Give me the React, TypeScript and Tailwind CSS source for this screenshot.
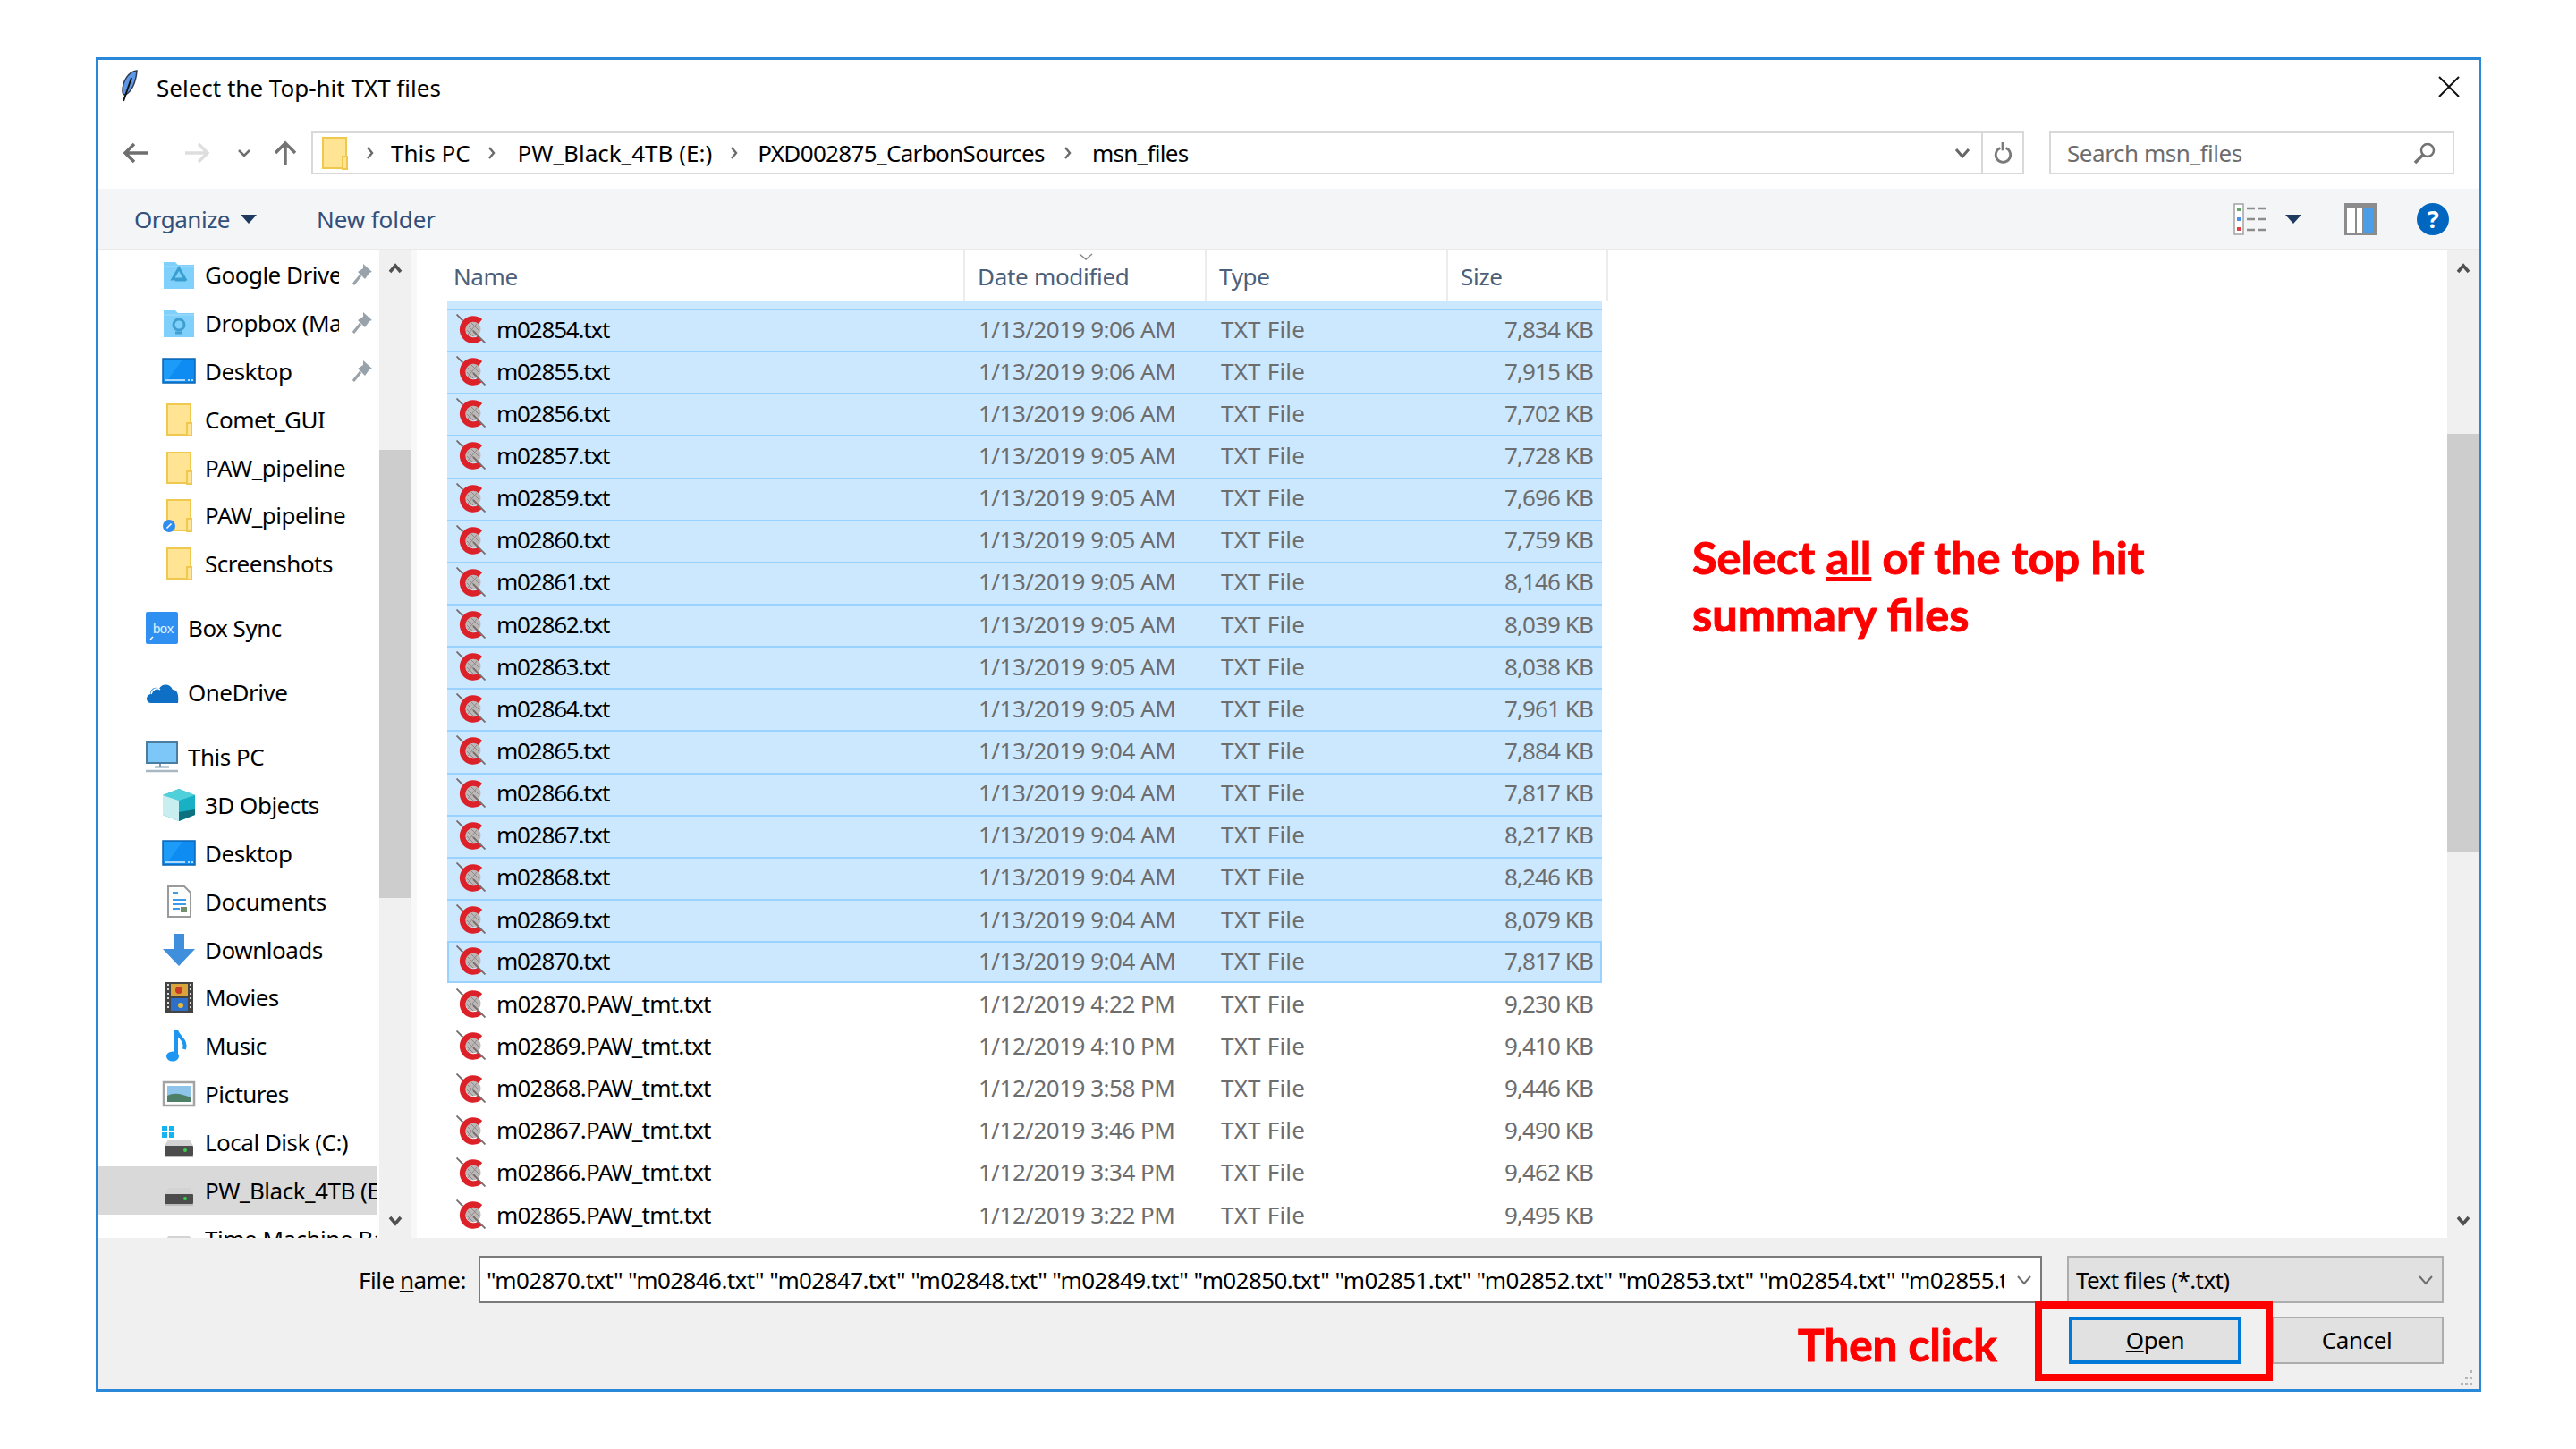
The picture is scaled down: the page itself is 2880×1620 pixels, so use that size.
import React from 'react';

type FileRow = { name: string; date: string; size: string; selected?: boolean };

const FILES: FileRow[] = [
  { name: 'm02854.txt', date: '1/13/2019 9:06 AM', size: '7,834 KB', selected: true },
  { name: 'm02855.txt', date: '1/13/2019 9:06 AM', size: '7,915 KB', selected: true },
  { name: 'm02856.txt', date: '1/13/2019 9:06 AM', size: '7,702 KB', selected: true },
  { name: 'm02857.txt', date: '1/13/2019 9:05 AM', size: '7,728 KB', selected: true },
  { name: 'm02859.txt', date: '1/13/2019 9:05 AM', size: '7,696 KB', selected: true },
  { name: 'm02860.txt', date: '1/13/2019 9:05 AM', size: '7,759 KB', selected: true },
  { name: 'm02861.txt', date: '1/13/2019 9:05 AM', size: '8,146 KB', selected: true },
  { name: 'm02862.txt', date: '1/13/2019 9:05 AM', size: '8,039 KB', selected: true },
  { name: 'm02863.txt', date: '1/13/2019 9:05 AM', size: '8,038 KB', selected: true },
  { name: 'm02864.txt', date: '1/13/2019 9:05 AM', size: '7,961 KB', selected: true },
  { name: 'm02865.txt', date: '1/13/2019 9:04 AM', size: '7,884 KB', selected: true },
  { name: 'm02866.txt', date: '1/13/2019 9:04 AM', size: '7,817 KB', selected: true },
  { name: 'm02867.txt', date: '1/13/2019 9:04 AM', size: '8,217 KB', selected: true },
  { name: 'm02868.txt', date: '1/13/2019 9:04 AM', size: '8,246 KB', selected: true },
  { name: 'm02869.txt', date: '1/13/2019 9:04 AM', size: '8,079 KB', selected: true },
  { name: 'm02870.txt', date: '1/13/2019 9:04 AM', size: '7,817 KB', selected: true },
  { name: 'm02870.PAW_tmt.txt', date: '1/12/2019 4:22 PM', size: '9,230 KB' },
  { name: 'm02869.PAW_tmt.txt', date: '1/12/2019 4:10 PM', size: '9,410 KB' },
  { name: 'm02868.PAW_tmt.txt', date: '1/12/2019 3:58 PM', size: '9,446 KB' },
  { name: 'm02867.PAW_tmt.txt', date: '1/12/2019 3:46 PM', size: '9,490 KB' },
  { name: 'm02866.PAW_tmt.txt', date: '1/12/2019 3:34 PM', size: '9,462 KB' },
  { name: 'm02865.PAW_tmt.txt', date: '1/12/2019 3:22 PM', size: '9,495 KB' },
];

const Svg: React.FC<{ children: React.ReactNode; className?: string; box?: string }> = ({
  children,
  className = 'w-[36px] h-[36px] shrink-0 overflow-visible',
  box = '0 0 36 36',
}) => (
  <svg viewBox={box} className={className} fill="none">
    {children}
  </svg>
);

const CometIcon = () => (
  <svg viewBox="0 0 33 33" className="w-[33px] h-[33px] shrink-0">
    <circle cx="19" cy="17" r="8.5" fill="#bdb8b8" />
    <path d="M13 13l10 10M17 10l8 8M12 18l7 7M23 11L13 23" stroke="#8f8a8a" strokeWidth="1" />
    <path d="M27 8.5A12 12 0 1 0 26.5 27" stroke="#dc2228" strokeWidth="6.5" fill="none" />
    <path d="M0.5 0.5l7 7M19 19l13.5 13.5" stroke="#776c6c" strokeWidth="1.8" />
  </svg>
);

const YellowFolder: React.FC<{ badge?: boolean }> = ({ badge }) => (
  <Svg>
    <rect x="5" y="1" width="26" height="34" fill="#ffe593" stroke="#efc850" strokeWidth="2" />
    <rect x="27" y="22" width="5" height="14" fill="#ffe593" stroke="#efc850" strokeWidth="2" />
    {badge && (
      <>
        <circle cx="7" cy="30" r="7" fill="#2f8cf0" />
        <path d="M4.5 32.5l5-5" stroke="#fff" strokeWidth="1.6" />
      </>
    )}
  </Svg>
);

const BlueFolder: React.FC<{ emblem: 'drive' | 'dropbox' }> = ({ emblem }) => (
  <Svg>
    <path d="M1 7V4h13l3 3h18v27H1z" fill="#7fd0fa" />
    <path d="M1 9h34" stroke="#a5def9" strokeWidth="1" />
    {emblem === 'drive' ? (
      <path d="M18 11l7 12h-14zM14 24h12" stroke="#3a9fd0" strokeWidth="3" />
    ) : (
      <>
        <circle cx="18" cy="20" r="6" stroke="#3f9fd0" strokeWidth="3" />
        <path d="M14 29h8" stroke="#3f9fd0" strokeWidth="3" />
      </>
    )}
  </Svg>
);

const DesktopIcon = () => (
  <Svg>
    <rect x="0" y="4" width="36" height="27" fill="#0f8cf2" stroke="#0a66b4" strokeWidth="1.5" />
    <path d="M22 5L6 27h-5V5z" fill="#1d9bf8" />
    <path d="M3 28h22" stroke="#e5f3ff" strokeWidth="1.5" />
    <path d="M28 28h2M32 28h2" stroke="#e5f3ff" strokeWidth="1.5" />
  </Svg>
);

const BoxIcon = () => (
  <Svg>
    <rect x="0" y="0" width="36" height="36" rx="2" fill="#2f90f2" />
    <text x="8" y="24" fill="#dff0ff" fontSize="15" fontFamily="Liberation Sans">box</text>
    <path d="M5 31l3-3" stroke="#fff" strokeWidth="1.5" />
  </Svg>
);

const OneDriveIcon = () => (
  <Svg>
    <path
      d="M6 30C0 30-1 22 5 20c0-6 6-9 10-6 3-6 12-6 15 1 5 0 7 5 6 15z"
      fill="#0f6fc4"
    />
    <path d="M6 20c1-5 6-8 10-5" stroke="#fff" strokeWidth="1.5" />
  </Svg>
);

const PcIcon = () => (
  <Svg>
    <rect x="1" y="2" width="34" height="23" fill="#7cc7f8" stroke="#4a7d9f" strokeWidth="2" />
    <path d="M16 26v3M10 29.5h16" stroke="#7f9db3" strokeWidth="2" />
    <path d="M0 34h36" stroke="#a9b7c2" strokeWidth="2.5" />
  </Svg>
);

const CubeIcon = () => (
  <Svg>
    <path d="M18 0l18 7v22l-18 7-18-7V7z" fill="#17b0c4" />
    <path d="M18 0l18 7-18 6-18-6z" fill="#4fd0da" />
    <path d="M0 7l18 6v23L0 29z" fill="#c9eef0" />
    <path d="M18 26l18-3v6l-18 7z" fill="#0c7280" />
  </Svg>
);

const DocIcon = () => (
  <Svg>
    <path d="M6 1h18l7 7v27H6z" fill="#fff" stroke="#9a9a9a" strokeWidth="2" />
    <path d="M11 8h6M11 16h15M11 21h15M11 26h8" stroke="#3b9be8" strokeWidth="2" />
    <rect x="20" y="24" width="7" height="6" fill="#6f8f6f" />
  </Svg>
);

const DownloadIcon = () => (
  <Svg>
    <path d="M12 0h12v17h12L18 36 0 17h12z" fill="#3f8fdc" />
  </Svg>
);

const MovieIcon = () => (
  <Svg>
    <rect x="3" y="1" width="31" height="34" fill="#444" />
    <rect x="9" y="3" width="19" height="14" fill="#d9a53a" />
    <rect x="9" y="19" width="19" height="14" fill="#2e6fc8" />
    <circle cx="18" cy="10" r="4" fill="#c53a2a" />
    <circle cx="20" cy="27" r="3" fill="#e4b93c" />
    <path d="M6 3v30M31 3v30" stroke="#ddd" strokeWidth="2" strokeDasharray="2 3" />
  </Svg>
);

const MusicIcon = () => (
  <Svg>
    <ellipse cx="11" cy="30" rx="7" ry="5.5" fill="#1c96f0" />
    <path d="M15 30V1c2 8 12 10 9 21" stroke="#1c96f0" strokeWidth="4" />
  </Svg>
);

const PictureIcon = () => (
  <Svg>
    <rect x="1" y="5" width="34" height="26" fill="#fff" stroke="#a3a3a3" strokeWidth="2.5" />
    <rect x="5" y="9" width="26" height="18" fill="#8ec3ea" />
    <path d="M5 20c8-4 16-2 26 2v5H5z" fill="#4e8068" />
  </Svg>
);

const DriveBody: React.FC<{ light?: boolean }> = ({ light }) => (
  <>
    <path d="M6 15h24l4 7H2z" fill="#d3d3d3" />
    <rect x="2" y="22" width="32" height="11" rx="1" fill={light ? '#d0d0d0' : '#4c4c4c'} />
    <rect x="2" y="33" width="32" height="2" fill="#bbb" />
    {!light && <circle cx="25" cy="27" r="2" fill="#35d04a" />}
  </>
);

const LocalDiskIcon = () => (
  <Svg>
    <rect x="-1" y="0" width="6" height="5" fill="#14b4f0" />
    <rect x="7" y="0" width="6" height="5" fill="#14b4f0" />
    <rect x="-1" y="7" width="6" height="6" fill="#14b4f0" />
    <rect x="7" y="7" width="6" height="6" fill="#14b4f0" />
    <DriveBody />
  </Svg>
);

const DriveIcon: React.FC<{ light?: boolean }> = ({ light }) => (
  <Svg>
    <DriveBody light={light} />
  </Svg>
);

const PinIcon = () => (
  <svg viewBox="0 0 22 24" className="w-[22px] h-[24px] ml-[4px] mr-[6px] shrink-0">
    <path d="M12 0l10 9-3 1-5 7-8-8 6-4z" fill="#98a2aa" />
    <path d="M9 13l-8 10" stroke="#98a2aa" strokeWidth="3" />
  </svg>
);

const NavItem: React.FC<{
  label: string;
  icon: React.ReactNode;
  top?: boolean;
  pin?: boolean;
  selected?: boolean;
}> = ({ label, icon, top, pin, selected }) => (
  <div
    className={`flex items-center h-[53.9px] w-[312px] shrink-0 gap-[11px] tracking-[-0.5px] ${
      top ? 'pl-[53px]' : 'pl-[72px]'
    } ${selected ? 'bg-[#d9d9d9]' : ''}`}
  >
    {icon}
    <span className="flex-1 min-w-0 overflow-hidden whitespace-nowrap">{label}</span>
    {pin && <PinIcon />}
  </div>
);

const ScrollBar: React.FC<{ width: string; thumbTop: string; thumbHeight: string }> = ({
  width,
  thumbTop,
  thumbHeight,
}) => (
  <div className={`flex flex-col items-center shrink-0 bg-[#f0f0f0] ${width}`}>
    <div className="h-[40px] flex items-center justify-center shrink-0">
      <svg viewBox="0 0 16 12" className="w-[16px] h-[12px]">
        <path d="M2 10l6-7 6 7" stroke="#505050" strokeWidth="3.5" fill="none" />
      </svg>
    </div>
    <div className={`w-full bg-[#cdcdcd] shrink-0 ${thumbTop} ${thumbHeight}`} />
    <div className="mt-auto h-[38px] flex items-center justify-center shrink-0">
      <svg viewBox="0 0 16 12" className="w-[16px] h-[12px]">
        <path d="M2 2l6 7 6-7" stroke="#505050" strokeWidth="3.5" fill="none" />
      </svg>
    </div>
  </div>
);

const Crumb = () => (
  <svg viewBox="0 0 10 14" className="w-[10px] h-[14px] shrink-0">
    <path d="M2 1l5 6-5 6" stroke="#6a6a6a" strokeWidth="2.4" fill="none" />
  </svg>
);

const DropChevron: React.FC<{ stroke?: string; width?: string }> = ({ stroke = '#6d6d6d', width = '2' }) => (
  <svg viewBox="0 0 18 12" className="w-[18px] h-[12px] shrink-0">
    <path d="M2 2l7 8 7-8" stroke={stroke} strokeWidth={width} fill="none" />
  </svg>
);

const Caret = () => (
  <svg viewBox="0 0 18 10" className="w-[18px] h-[10px] shrink-0">
    <path d="M0 0h18l-9 10z" fill="#1e3a5f" />
  </svg>
);

const HeaderCell: React.FC<{ label: string; width: string; sorted?: boolean }> = ({ label, width, sorted }) => (
  <div className={`relative flex items-center h-full shrink-0 border-r-2 border-[#ececec] pl-[14px] tracking-[-0.3px] ${width}`}>
    {sorted && (
      <svg viewBox="0 0 16 8" className="absolute top-[3px] left-[127px] w-[16px] h-[8px]">
        <path d="M1 1l7 6 7-6" stroke="#8a8a8a" strokeWidth="1.5" fill="none" />
      </svg>
    )}
    <span className="text-[#4c607a]">{label}</span>
  </div>
);

export default function App() {
  return (
    <div className="relative w-[2880px] h-[1620px] overflow-hidden bg-white pt-[64px] pl-[107px] font-['Noto_Sans',sans-serif] text-[26px] leading-[34px] tracking-[-0.4px] text-black">
      <div className="flex flex-col w-[2667px] h-[1492px] border-[3px] border-[#2b88d8] bg-white">
        {/* Title bar */}
        <div className="flex items-center h-[80px] shrink-0 pl-[25px] pr-[21px] pb-[18px]">
          <svg viewBox="0 0 20 36" className="w-[20px] h-[36px] mt-[-4px] shrink-0">
            <path d="M18 1C9 2 2 12 2 24c0 3 1 4 3 4 7-3 12-14 13-27z" fill="#5f97e8" stroke="#2d3a50" strokeWidth="1.5" />
            <path d="M12 9L3 35" stroke="#111" strokeWidth="2" />
          </svg>
          <span className="ml-[20px] tracking-normal">Select the Top-hit TXT files</span>
          <svg viewBox="0 0 24 24" className="w-[24px] h-[24px] ml-auto mt-[-3px]">
            <path d="M1 1l22 22M23 1L1 23" stroke="#111" strokeWidth="2" />
          </svg>
        </div>

        {/* Navigation bar */}
        <div className="flex items-center h-[48px] shrink-0 pl-[28px] pr-[27px]">
          <svg viewBox="0 0 28 24" className="w-[28px] h-[24px] shrink-0">
            <path d="M27 12H3M12 2L2 12l10 10" stroke="#6f6f6f" strokeWidth="3.5" fill="none" />
          </svg>
          <svg viewBox="0 0 28 24" className="w-[28px] h-[24px] shrink-0 ml-[40px]">
            <path d="M1 12h24M16 2l10 10-10 10" stroke="#dedede" strokeWidth="3.5" fill="none" />
          </svg>
          <svg viewBox="0 0 16 10" className="w-[16px] h-[10px] shrink-0 ml-[31px]">
            <path d="M2 2l6 6 6-6" stroke="#6f6f6f" strokeWidth="2.5" fill="none" />
          </svg>
          <svg viewBox="0 0 28 28" className="w-[28px] h-[28px] shrink-0 ml-[24px]">
            <path d="M14 27V3M3 14L14 3l11 11" stroke="#737373" strokeWidth="3.5" fill="none" />
          </svg>
          <div className="flex items-center h-[48px] w-[1915px] ml-[15px] shrink-0 border-2 border-[#d9d9d9]">
            <div className="ml-[6px] flex items-center">
              <YellowFolder />
            </div>
            <div className="ml-[17px] flex items-center">
              <Crumb />
              <span className="ml-[18px] tracking-normal">This PC</span>
            </div>
            <div className="ml-[19px] flex items-center">
              <Crumb />
              <span className="ml-[24px] tracking-normal">PW_Black_4TB (E:)</span>
            </div>
            <div className="ml-[20px] flex items-center">
              <Crumb />
              <span className="ml-[21px] tracking-[-0.65px]">PXD002875_CarbonSources</span>
            </div>
            <div className="ml-[21px] flex items-center">
              <Crumb />
              <span className="ml-[22px] tracking-[-0.7px]">msn_files</span>
            </div>
            <div className="ml-auto mr-[12px]">
              <DropChevron stroke="#666" width="3" />
            </div>
            <div className="flex items-center justify-center h-full w-[46px] border-l-2 border-[#d9d9d9]">
              <svg viewBox="0 0 24 28" className="w-[22px] h-[26px]">
                <path d="M9 8a9 9 0 1 0 7 0M12 1v10" stroke="#7a7a7a" strokeWidth="3" fill="none" />
              </svg>
            </div>
          </div>
          <div className="flex items-center h-[48px] ml-auto w-[453px] shrink-0 border-2 border-[#d9d9d9] pl-[18px] pr-[18px] text-[#6d6d6d] tracking-[-0.45px]">
            <span>Search msn_files</span>
            <svg viewBox="0 0 26 26" className="w-[26px] h-[26px] ml-auto">
              <circle cx="16" cy="10" r="7" stroke="#737373" strokeWidth="2.5" fill="none" />
              <path d="M11 15L2 24" stroke="#737373" strokeWidth="3.5" />
            </svg>
          </div>
        </div>

        {/* Toolbar */}
        <div className="flex items-center h-[69px] mt-[16px] shrink-0 bg-[#f4f5f7] border-b-2 border-[#e9e9e9] pl-[40px] pr-[33px] text-[#33507a]">
          <span className="tracking-[-0.5px]">Organize</span>
          <div className="ml-[12px]">
            <Caret />
          </div>
          <span className="ml-[67px] tracking-[-0.1px]">New folder</span>
          <svg viewBox="0 0 38 36" className="w-[38px] h-[36px] ml-auto shrink-0">
            <rect x="1" y="1" width="10" height="34" fill="#fff" stroke="#a3a3a3" strokeWidth="1.5" />
            <rect x="4" y="5" width="4" height="4" fill="#6aa56a" />
            <rect x="4" y="16" width="4" height="4" fill="#4a8ff0" />
            <rect x="4" y="27" width="4" height="4" fill="#e14040" />
            <path d="M15 6h22M15 18h22M15 30h22" stroke="#8c8c8c" strokeWidth="2.5" strokeDasharray="9 3" />
          </svg>
          <div className="ml-[20px]">
            <Caret />
          </div>
          <svg viewBox="0 0 36 36" className="w-[36px] h-[36px] ml-[48px] shrink-0">
            <rect x="0" y="0" width="36" height="36" fill="#8c8c8c" />
            <rect x="3" y="6" width="9" height="27" fill="#fff" />
            <rect x="14" y="6" width="6" height="27" fill="#fff" />
            <rect x="21" y="6" width="12" height="27" fill="#4a9de6" />
          </svg>
          <div className="flex items-center justify-center w-[36px] h-[36px] ml-[45px] shrink-0 rounded-full bg-[#0066bf] text-white font-bold text-[27px]">
            ?
          </div>
        </div>

        {/* Main */}
        <div className="flex flex-1 min-h-0 h-[1104px]">
          <div className="flex flex-col w-[314px] shrink-0 overflow-hidden">
            <NavItem label="Google Drive" icon={<BlueFolder emblem="drive" />} pin />
            <NavItem label="Dropbox (MarkSync)" icon={<BlueFolder emblem="dropbox" />} pin />
            <NavItem label="Desktop" icon={<DesktopIcon />} pin />
            <NavItem label="Comet_GUI" icon={<YellowFolder />} />
            <NavItem label="PAW_pipeline" icon={<YellowFolder />} />
            <NavItem label="PAW_pipeline" icon={<YellowFolder badge />} />
            <NavItem label="Screenshots" icon={<YellowFolder />} />
            <div className="h-[18px] shrink-0" />
            <NavItem label="Box Sync" icon={<BoxIcon />} top />
            <div className="h-[18px] shrink-0" />
            <NavItem label="OneDrive" icon={<OneDriveIcon />} top />
            <div className="h-[18px] shrink-0" />
            <NavItem label="This PC" icon={<PcIcon />} top />
            <NavItem label="3D Objects" icon={<CubeIcon />} />
            <NavItem label="Desktop" icon={<DesktopIcon />} />
            <NavItem label="Documents" icon={<DocIcon />} />
            <NavItem label="Downloads" icon={<DownloadIcon />} />
            <NavItem label="Movies" icon={<MovieIcon />} />
            <NavItem label="Music" icon={<MusicIcon />} />
            <NavItem label="Pictures" icon={<PictureIcon />} />
            <NavItem label="Local Disk (C:)" icon={<LocalDiskIcon />} />
            <NavItem label="PW_Black_4TB (E:)" icon={<DriveIcon />} selected />
            <NavItem label="Time Machine Backup" icon={<DriveIcon light />} />
          </div>
          <ScrollBar width="w-[36px]" thumbTop="mt-[183px]" thumbHeight="h-[501px]" />

          <div className="flex flex-col flex-1 min-w-0 border-l-[6px] border-[#f8f8f8] pl-[34px] overflow-hidden">
            <div className="flex items-center h-[57px] shrink-0">
              <div className="relative flex items-center h-full w-[579px] shrink-0 border-r-2 border-[#ececec] pl-[7px]">
                <span className="text-[#4c607a]">Name</span>
              </div>
              <HeaderCell label="Date modified" width="w-[270px]" sorted />
              <HeaderCell label="Type" width="w-[270px]" />
              <HeaderCell label="Size" width="w-[179px]" />
            </div>
            <div className="h-[8px] w-[1291px] shrink-0 bg-[#cce8ff]" />
            {FILES.map((f, i) => (
              <div
                key={f.name}
                className={`flex items-center h-[47.15px] w-[1291px] shrink-0 ${
                  f.selected ? 'pb-[4px] bg-[#cce8ff] border-t-2 border-[#99d1ff]' : 'pb-[2px]'
                } ${i === 15 ? 'border-b-2 shadow-[inset_2px_0_0_#99d1ff,inset_-2px_0_0_#99d1ff]' : ''}`}
              >
                <div
                  className={`flex items-center w-[579px] shrink-0 pl-[10px] gap-[12px] ${
                    f.selected ? 'tracking-[-1.2px]' : 'tracking-[-0.8px]'
                  }`}
                >
                  <CometIcon />
                  <span>{f.name}</span>
                </div>
                <span className="w-[270px] shrink-0 pl-[15px] text-[#6d6d6d] tracking-[-0.5px]">{f.date}</span>
                <span className="w-[270px] shrink-0 pl-[16px] text-[#6d6d6d] tracking-[0.2px]">TXT File</span>
                <span className="flex-1 text-right pr-[10px] text-[#6d6d6d] tracking-[-0.9px]">{f.size}</span>
              </div>
            ))}
          </div>
          <ScrollBar width="w-[35px]" thumbTop="mt-[165px]" thumbHeight="h-[467px]" />
        </div>

        {/* Bottom panel */}
        <div className="relative flex flex-col h-[169px] shrink-0 bg-[#f0f0f0] pt-[20px]">
          <div className="flex items-center h-[53px] shrink-0">
            <span className="w-[411px] text-right shrink-0 tracking-[-0.5px]">
              File <span className="underline">n</span>ame:
            </span>
            <div className="flex items-center h-full w-[1748px] ml-[14px] shrink-0 bg-white border-2 border-[#7a7a7a] pl-[7px] pr-[9px]">
              <span className="flex-1 min-w-0 overflow-hidden whitespace-nowrap tracking-[-0.6px]">
                "m02870.txt" "m02846.txt" "m02847.txt" "m02848.txt" "m02849.txt" "m02850.txt" "m02851.txt" "m02852.txt" "m02853.txt" "m02854.txt" "m02855.txt"
              </span>
              <div className="ml-[14px]">
                <DropChevron />
              </div>
            </div>
            <div className="flex items-center h-full w-[421px] ml-[28px] shrink-0 bg-[#e1e1e1] border-2 border-[#adadad] pl-[8px] pr-[9px] tracking-[-0.6px]">
              <span>Text files (*.txt)</span>
              <div className="ml-auto">
                <DropChevron />
              </div>
            </div>
          </div>
          <div className="flex justify-end gap-[34px] pr-[39px] mt-[15px]">
            <div className="flex items-center justify-center w-[193px] h-[53px] pb-[2px] bg-[#e1e1e1] border-[4px] border-[#0078d7]">
              <span>
                <span className="underline">O</span>pen
              </span>
            </div>
            <div className="flex items-center justify-center w-[192px] h-[53px] pb-[2px] pr-[2px] bg-[#e1e1e1] border-2 border-[#adadad]">
              Cancel
            </div>
          </div>
          <svg viewBox="0 0 15 18" className="absolute right-[7px] bottom-[3px] w-[15px] h-[18px]">
            <path d="M12 0h3v3h-3zM7 7h3v3H7zM12 7h3v3h-3zM2 14h3v3H2zM7 14h3v3H7zM12 14h3v3h-3z" fill="#b5b5b5" />
          </svg>
        </div>
      </div>

      {/* Annotations laid over the screenshot */}
      <div className="absolute left-[1892px] top-[591px] whitespace-nowrap font-['Lato',sans-serif] font-bold text-[50.5px] leading-[64px] tracking-normal text-[#ff0000] [-webkit-text-stroke:1px_#ff0000]">
        Select <span className="underline">all</span> of the top hit
        <br />
        summary files
      </div>
      <div className="absolute left-[2010px] top-[1471px] whitespace-nowrap font-['Lato',sans-serif] font-bold text-[49.5px] leading-[64px] tracking-normal text-[#ff0000] [-webkit-text-stroke:1px_#ff0000]">
        Then click
      </div>
      <div className="absolute left-[2275px] top-[1455px] w-[266px] h-[89px] border-[8px] border-[#ff0000]" />
    </div>
  );
}
